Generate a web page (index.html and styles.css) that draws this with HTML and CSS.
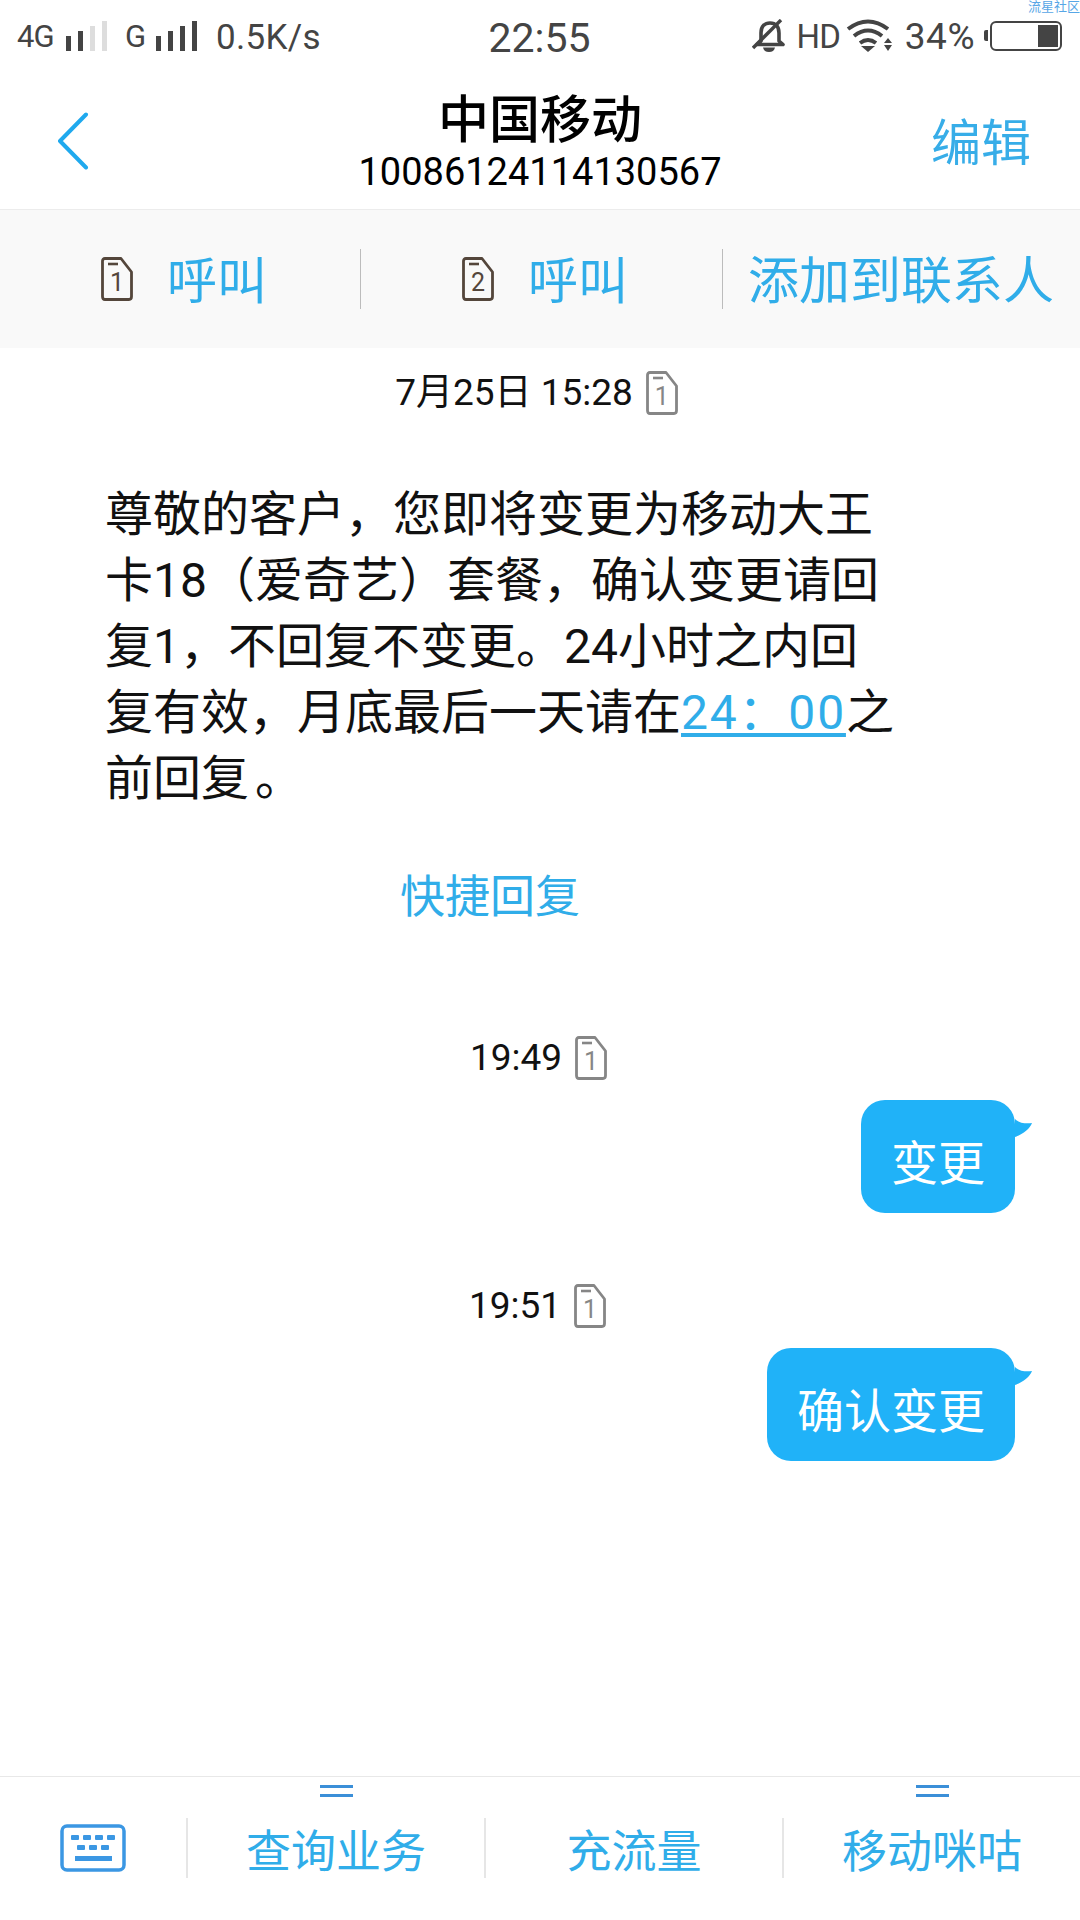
FILE: index.html
```html
<!DOCTYPE html>
<html lang="zh-CN">
<head>
<meta charset="utf-8">
<title>中国移动</title>
<link rel="stylesheet" href="styles.css">
</head>
<body>
<svg class="defs" width="0" height="0" aria-hidden="true">
  <symbol id="sim" viewBox="0 0 34 44">
    <path d="M2.500 4Q2.500 1.500 5 1.500H21L31.500 15V39.500Q31.500 42.500 29 42.500H5Q2.500 42.500 2.500 39.500Z" fill="none" stroke="currentColor" stroke-width="2.800" stroke-linejoin="round"/>
    <path d="M8 7H18" stroke="currentColor" stroke-width="2.600"/>
  </symbol>
</svg>
<div class="phone">
  <div class="status">
    <div class="status-left">
      <span class="net">4G</span>
      <svg class="bars" width="41" height="32" viewBox="0 0 41 32"><rect x="0" y="16" width="5" height="15" fill="#444"/><rect x="12" y="11" width="5" height="20" fill="#444"/><rect x="24" y="6" width="5" height="25" fill="#ddd"/><rect x="36" y="1" width="5" height="30" fill="#ddd"/></svg>
      <span class="net net-g">G</span>
      <svg class="bars" width="41" height="32" viewBox="0 0 41 32"><rect x="0" y="16" width="5" height="15" fill="#444"/><rect x="12" y="11" width="5" height="20" fill="#444"/><rect x="24" y="6" width="5" height="25" fill="#444"/><rect x="36" y="1" width="5" height="30" fill="#444"/></svg>
      <span class="speed">0.5K/s</span>
    </div>
    <div class="clock">22:55</div>
    <div class="status-right">
      <svg class="bell" width="36" height="34" viewBox="0 0 36 34"><path d="M9 14C9 7 13 4 18 4C24 4 27 8 27 14V22L31 25.500H5L9 22Z" fill="none" stroke="#444" stroke-width="3.600" stroke-linejoin="round"/><path d="M11 28.500H23Q22 33 17 33T11 28.500Z" fill="#444"/><path d="M1 29L29 1" stroke="#444" stroke-width="3.400"/></svg>
      <span class="hd">HD</span>
      <svg class="wifi" width="46" height="34" viewBox="0 0 46 34"><path d="M2 10Q22 -5 42 10M8 17Q22 6 36 17M14 24Q22 18 30 24" fill="none" stroke="#444" stroke-width="4"/><path d="M15 27H29L22 33Z" fill="#444"/><path d="M42 19L46 24H38ZM38 26H46L42 32Z" fill="#444"/></svg>
      <span class="pct">34%</span>
      <div class="battery"><span class="battery-tip"></span><span class="battery-fill"></span></div>
    </div>
    <span class="watermark">流星社区</span>
  </div>

  <header class="head">
    <svg class="back" width="32" height="58" viewBox="0 0 32 58"><path d="M29 2.500L3 29L29 55.500" fill="none" stroke="#1fa9ee" stroke-width="4" stroke-linecap="round" stroke-linejoin="round"/></svg>
    <div class="who">
      <div class="name">中国移动</div>
      <div class="number">10086124114130567</div>
    </div>
    <div class="edit">编辑</div>
  </header>

  <nav class="actions">
    <div class="act act-1">
      <span class="sim-wrap sim-brown"><svg class="sim"><use href="#sim"/></svg><span class="sim-no">1</span></span>
      <span class="act-text">呼叫</span>
    </div>
    <div class="act act-2">
      <span class="sim-wrap sim-brown"><svg class="sim"><use href="#sim"/></svg><span class="sim-no">2</span></span>
      <span class="act-text">呼叫</span>
    </div>
    <div class="act act-3"><span class="act-text act-add">添加到联系人</span></div>
  </nav>

  <main class="chat">
    <div class="stamp stamp-first">
      <span>7月25日 15:28</span>
      <span class="sim-wrap sim-grey"><svg class="sim"><use href="#sim"/></svg><span class="sim-no">1</span></span>
    </div>
    <p class="msg">尊敬的客户，您即将变更为移动大王<br>卡18（爱奇艺）套餐，确认变更请回<br>复1，不回复不变更。24小时之内回<br>复有效，月底最后一天请在<a class="link">24：00</a>之<br>前回复<span class="stop">。</span></p>
    <div class="quick">快捷回复</div>

    <div class="stamp stamp-second">
      <span>19:49</span>
      <span class="sim-wrap sim-grey"><svg class="sim"><use href="#sim"/></svg><span class="sim-no">1</span></span>
    </div>
    <div class="out"><div class="bubble">变更<svg class="tail" width="18" height="18" viewBox="0 0 18 18"><path d="M0 0C4 4 11 5 17 4C15 10 8 15 0 18Z" fill="#20b2f8"/></svg></div></div>

    <div class="stamp stamp-third">
      <span>19:51</span>
      <span class="sim-wrap sim-grey"><svg class="sim"><use href="#sim"/></svg><span class="sim-no">1</span></span>
    </div>
    <div class="out"><div class="bubble">确认变更<svg class="tail" width="18" height="18" viewBox="0 0 18 18"><path d="M0 0C4 4 11 5 17 4C15 10 8 15 0 18Z" fill="#20b2f8"/></svg></div></div>
  </main>

  <footer class="menu">
    <div class="tab tab-kb">
      <svg width="66" height="48" viewBox="0 0 66 48"><rect x="2" y="2" width="62" height="44" rx="5" fill="none" stroke="#3b97e3" stroke-width="3.500"/><g fill="#3b97e3"><rect x="11" y="11" width="8" height="5" rx="1"/><rect x="23" y="11" width="8" height="5" rx="1"/><rect x="35" y="11" width="8" height="5" rx="1"/><rect x="47" y="11" width="8" height="5" rx="1"/><rect x="17" y="21" width="8" height="5" rx="1"/><rect x="29" y="21" width="8" height="5" rx="1"/><rect x="41" y="21" width="8" height="5" rx="1"/><rect x="15" y="32" width="37" height="5"/></g></svg>
    </div>
    <div class="tab"><span class="lines"></span>查询业务</div>
    <div class="tab">充流量</div>
    <div class="tab"><span class="lines"></span>移动咪咕</div>
  </footer>
</div>
</body>
</html>
```

FILE: styles.css
```css
* { box-sizing: border-box; }
html, body { margin: 0; padding: 0; background: #fff; }
body { font-family: Roboto, "Noto Sans CJK SC", sans-serif; }
.defs { position: absolute; }
.phone { width: 1080px; height: 1920px; display: flex; flex-direction: column; position: relative; overflow: hidden; color: #000; }

.status { height: 70px; padding: 2px 18px 0 17px; display: grid; grid-template-columns: 1fr auto 1fr; align-items: center; color: #444; position: relative; flex: none; }
.status-left, .status-right { display: flex; align-items: center; }
.status-right { justify-content: flex-end; }
.net { font-size: 31px; letter-spacing: -1px; width: 49px; }
.net-g { margin-left: 18px; width: 31px; letter-spacing: 0; }
.bars { flex: none; }
.speed { font-size: 35px; margin-left: 19px; letter-spacing: 0.3px; padding-top: 2px; }
.clock { font-size: 41px; text-align: center; padding-top: 3px; }
.bell { margin-right: 8.5px; }
.hd { font-size: 33px; margin-right: 6px; letter-spacing: -1px; }
.wifi { margin-right: 13px; }
.pct { font-size: 37px; margin-right: 15px; letter-spacing: 0.5px; }
.battery { width: 72px; height: 30px; border: 2.5px solid #444; border-radius: 6px; position: relative; display: flex; justify-content: flex-end; padding: 2px; }
.battery-fill { width: 20px; background: #444; }
.battery-tip { position: absolute; left: -8px; top: 7px; width: 4px; height: 11px; background: #444; border-radius: 2px 0 0 2px; }
.watermark { position: absolute; right: 0; top: -1px; font-size: 13px; line-height: 16px; color: #57a6e6; }

.head { height: 140px; flex: none; border-bottom: 1px solid #ececec; display: grid; grid-template-columns: 1fr auto 1fr; align-items: start; position: relative; padding: 0 57px; }
.back { margin-top: 42px; }
.who { text-align: center; }
.name { font-size: 51px; line-height: 60px; font-weight: 500; margin-top: 21px; }
.number { font-size: 38px; line-height: 42px; }
.edit { font-size: 50px; line-height: 60px; color: #37ade8; text-align: right; margin-top: 44px; margin-right: -8px; }

.actions { height: 138px; flex: none; background: #f9f9f9; display: grid; grid-template-columns: 361px 362px 1fr; align-items: center; color: #30ade9; }
.act { height: 60px; display: flex; align-items: center; }
.act-1, .act-2 { border-right: 1px solid #bcbcbc; }
.act-1 { padding-left: 100px; }
.act-2 { padding-left: 100px; }
.act-3 { padding-left: 25px; }
.act-text { font-size: 50px; margin-left: 33px; line-height: 58px; padding-top: 6px; }
.act-add { font-size: 51px; margin-left: 0; }

.sim-wrap { position: relative; display: inline-block; width: 34px; height: 44px; flex: none; }
.sim { display: block; width: 34px; height: 44px; }
.sim-no { position: absolute; left: 0; right: 0; top: 12px; text-align: center; font-size: 25px; line-height: 28px; }
.sim-brown { color: #54463b; }
.sim-grey { color: #868686; }

.chat { flex: 1; display: flex; flex-direction: column; }
.stamp { display: flex; align-items: center; justify-content: center; font-size: 37px; line-height: 44px; height: 44px; color: #111; gap: 12px; }
.stamp-first { margin-top: 23px; padding-right: 6px; }
.stamp-second { margin-top: 106px; padding-right: 2px; }
.stamp-third { margin-top: 71px; padding-right: 4px; }
.msg { margin: 67px 0 0 105px; font-size: 48px; line-height: 66px; color: #111; }
.link { color: #30ade9; text-decoration: underline; text-underline-offset: 4px; letter-spacing: 1.8px; }
.stop { margin-left: 6px; }
.quick { margin: 54px 0 0 400px; font-size: 45px; line-height: 64px; color: #30ade9; }
.out { display: flex; justify-content: flex-end; padding-right: 65px; margin-top: 20px; }
.bubble { position: relative; background: #20b2f8; color: #fff; font-size: 47px; height: 113px; padding: 6px 30px 0; border-radius: 24px; display: flex; align-items: center; }
.tail { position: absolute; left: 100%; top: 19px; }

.menu { height: 144px; flex: none; border-top: 1px solid #e8e8e8; display: grid; grid-template-columns: 188px 298px 298px 1fr; padding-top: 41px; }
.tab { height: 60px; display: flex; align-items: center; justify-content: center; font-size: 45px; color: #30ade9; border-right: 2px solid #e6e6e6; position: relative; }
.tab:last-child { border-right: 0; }
.lines { position: absolute; top: -33px; left: 50%; margin-left: -16px; width: 33px; height: 12px; border-top: 3.5px solid #3b8fd8; border-bottom: 3.5px solid #3b8fd8; }
```
